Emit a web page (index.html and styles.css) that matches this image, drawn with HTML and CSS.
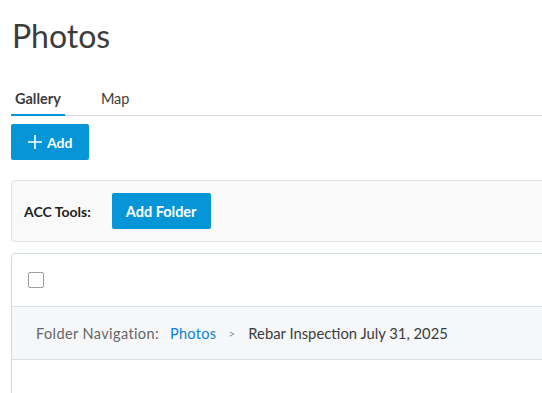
FILE: index.html
```html
<!DOCTYPE html>
<html lang="en">
<head>
<meta charset="UTF-8" />
<meta name="viewport" content="width=device-width, initial-scale=1" />
<title>Photos</title>
<link rel="stylesheet" href="styles.css">
</head>
<body>
<div class="page">
  <h1 class="title">Photos</h1>

  <div class="tabs">
    <div class="tab active">Gallery</div>
    <div class="tab">Map</div>
  </div>

  <button class="btn btn-add">
    <svg width="16" height="16" viewBox="0 0 16 16"><path d="M8 1v14M1 8h14" stroke="#fff" stroke-width="1.6" fill="none"/></svg>
    Add
  </button>

  <div class="tools">
    <span class="tools-label">ACC Tools:</span>
    <button class="btn btn-folder">Add Folder</button>
  </div>

  <div class="grid">
    <div class="grid-head">
      <span class="checkbox"></span>
    </div>
    <div class="crumbs">
      <span class="crumbs-label">Folder Navigation:</span>
      <a class="crumb-link">Photos</a>
      <span class="crumb-sep">&gt;</span>
      <span class="crumb-current">Rebar Inspection July 31, 2025</span>
    </div>
    <div class="grid-body"></div>
  </div>
</div>
</body>
</html>
```

FILE: styles.css
```css
body {
  margin: 0;
  font-family: Lato, "Noto Sans", sans-serif;
  color: #3c3c3c;
  background: #fff;
  overflow: hidden;
}
.page {
  padding: 0 0 0 11px;
  width: 560px;
}
.title {
  margin: 0;
  padding: 16px 0 0 1px;
  font-size: 32px;
  font-weight: 400;
  line-height: 40px;
  color: #3c3c3c;
}
.tabs {
  display: flex;
  margin-top: 29px;
  border-bottom: 1px solid #d9d9d9;
}
.tab {
  padding: 4px 4px 6px 4px;
  margin-right: 32px;
  font-size: 14.5px;
  line-height: 20px;
  color: #3c3c3c;
}
.tab.active {
  font-weight: 700;
  box-shadow: inset 0 -2px 0 #0696d7;
  margin-bottom: -1px;
  padding-bottom: 7px;
}
.btn {
  border: none;
  border-radius: 2px;
  background: #0696d7;
  color: #fff;
  font-family: inherit;
  font-size: 14px;
  font-weight: 700;
  cursor: pointer;
}
.btn-add {
  display: flex;
  align-items: center;
  gap: 4px;
  margin-top: 8px;
  width: 78px;
  height: 36px;
  padding: 0 0 0 16px;
}
.tools {
  display: flex;
  align-items: center;
  margin-top: 20px;
  height: 60px;
  padding-left: 12px;
  background: #f9f9f9;
  border: 1px solid #e0e0e0;
  border-radius: 4px;
}
.tools-label {
  font-size: 14px;
  font-weight: 700;
  color: #1f1f1f;
  margin-right: 21px;
}
.btn-folder {
  height: 36px;
  padding: 0 14px;
  font-size: 14.5px;
}
.grid {
  margin-top: 11px;
  border: 1px solid #cfdbe3;
  border-radius: 4px;
  height: 200px;
}
.grid-head {
  height: 52px;
  padding-left: 16px;
  display: flex;
  align-items: center;
}
.checkbox {
  width: 14px;
  height: 14px;
  border: 1px solid #9e9e9e;
  border-radius: 2px;
}
.crumbs {
  display: flex;
  align-items: center;
  height: 52px;
  padding-left: 24px;
  background: #f5f7f9;
  border-top: 1px solid #dde0e3;
  border-bottom: 1px solid #dde0e3;
  font-size: 14.5px;
}
.crumbs-label {
  color: #666;
  margin-right: 11px;
  letter-spacing: 0.4px;
}
.crumb-link {
  color: #0a7fe0;
  letter-spacing: 0.3px;
}
.crumb-sep {
  color: #999;
  margin: 0 13px 0 12px;
  font-size: 12px;
}
.crumb-current {
  color: #3c3c3c;
  font-size: 14.8px;
}
```
